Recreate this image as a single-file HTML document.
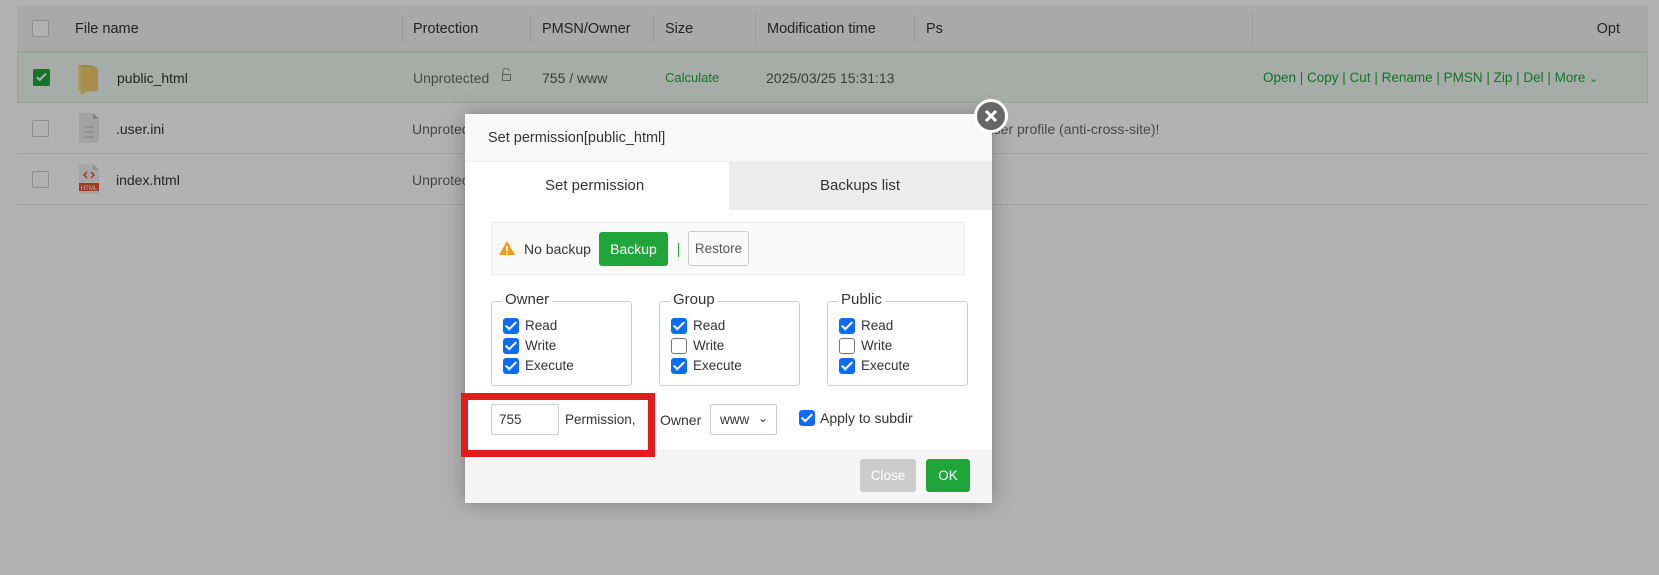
<!DOCTYPE html>
<html><head><meta charset="utf-8"><style>
*{box-sizing:border-box;margin:0;padding:0}
body{width:1659px;height:575px;overflow:hidden;background:#fff;font-family:"Liberation Sans",sans-serif;font-size:14px;color:#333;position:relative}
.abs{position:absolute}
.tbl{left:17px;top:6px;width:1631px}
.hdr{position:absolute;left:0;top:0;width:1631px;height:46px;background:#f2f2f2;border-bottom:1px solid #e6e6e6}
.row{position:absolute;left:0;width:1631px;height:51px;border-bottom:1px solid #e6e6e6}
.t{position:absolute;white-space:nowrap;line-height:20px}
.div{position:absolute;top:9px;height:28px;width:1px;background:#ddd}
.cb{position:absolute;width:17px;height:17px;border:1px solid #ccc;background:#fff;border-radius:2px}
.g{color:#20a53a}
.ov{position:absolute;left:0;top:0;width:1659px;height:575px;background:rgba(0,0,0,.3)}
.dlg{position:absolute;left:465px;top:114px;width:527px;height:389px;background:#fff;box-shadow:0 0 20px rgba(0,0,0,.3)}
.fs{position:absolute;top:187px;width:141px;height:85px;border:1px solid #ccc;border-radius:3px}
.lg{position:absolute;top:-11px;left:10px;background:#fff;padding:0 3px;font-size:15px;color:#333}
.ck{position:absolute;width:16px;height:16px;border-radius:3px;background:#0b6cf5}
.ck:after{content:"";position:absolute;left:5px;top:1px;width:4px;height:9px;border:solid #fff;border-width:0 2px 2px 0;transform:rotate(45deg)}
.uk{position:absolute;width:16px;height:16px;border-radius:3px;border:1.5px solid #777;background:#fff}
.lb{position:absolute;font-size:13.5px;line-height:16px}
</style></head><body>
<div class="abs tbl" style="height:200px">
 <div class="hdr">
  <div class="cb" style="left:15px;top:14px"></div>
  <div class="t" style="left:58px;top:13px;font-size:14.5px">File name</div>
  <div class="div" style="left:385px"></div><div class="t" style="left:396px;top:13px;font-size:14.5px">Protection</div>
  <div class="div" style="left:513px"></div><div class="t" style="left:525px;top:13px;font-size:14.5px">PMSN/Owner</div>
  <div class="div" style="left:636px"></div><div class="t" style="left:648px;top:13px;font-size:14.5px">Size</div>
  <div class="div" style="left:738px"></div><div class="t" style="left:750px;top:13px;font-size:14.5px">Modification time</div>
  <div class="div" style="left:897px"></div><div class="t" style="left:909px;top:13px;font-size:14.5px">Ps</div>
  <div class="div" style="left:1235px"></div><div class="t" style="right:28px;top:13px;font-size:14.5px">Opt</div>
 </div>
 <div class="row" style="top:46px;background:#eef8f1;border:1px solid #d8eadc">
  <div class="cb" style="left:15px;top:16px;background:#20a53a;border-color:#20a53a"><div style="position:absolute;left:5px;top:1px;width:5px;height:10px;border:solid #fff;border-width:0 2px 2px 0;transform:rotate(45deg)"></div></div>
  <svg class="abs" style="left:60px;top:10px" width="22" height="32"><path d="M0 2h13l7 3v23H3z" fill="#e4c56a"/><path d="M0 2l3 1v26l-3-2z" fill="#f3d98a"/><path d="M3 5l10-1 7 1v23l-12 1-5 3z" fill="#f1cf6e"/></svg>
  <div class="t" style="left:99px;top:15px">public_html</div>
  <div class="t" style="left:395px;top:15px;color:#666">Unprotected</div>
  <svg class="abs" style="left:482px;top:15px" width="12" height="14"><path d="M3 6V3a3 3 0 0 1 6 0" fill="none" stroke="#888"/><rect x="2.5" y="6.5" width="8" height="6" fill="none" stroke="#888"/></svg>
  <div class="t" style="left:524px;top:15px;color:#555">755 / www</div>
  <div class="t g" style="left:647px;top:15px;font-size:13px">Calculate</div>
  <div class="t" style="left:748px;top:15px;color:#555">2025/03/25 15:31:13</div>
  <div class="t g" style="left:1245px;top:15px;font-size:13.5px">Open | Copy | Cut | Rename | PMSN | Zip | Del | More <span style="font-size:11px">&#8964;</span></div>
 </div>
 <div class="row" style="top:97px">
  <div class="cb" style="left:15px;top:17px"></div>
  <svg class="abs" style="left:62px;top:10px" width="22" height="30"><path d="M0 0h14l6 6v24H0z" fill="#e8e8e8"/><path d="M14 0l6 6h-6z" fill="#bbb"/><path d="M5 14h10M5 19h10M5 24h10" stroke="#bbb"/></svg>
  <div class="t" style="left:99px;top:16px">.user.ini</div>
  <div class="t" style="left:395px;top:16px;color:#666">Unprotected</div>
  <div class="t" style="left:814px;top:16px;color:#666">Please do not delete the user profile (anti-cross-site)!</div>
 </div>
 <div class="row" style="top:148px">
  <div class="cb" style="left:15px;top:17px"></div>
  <svg class="abs" style="left:62px;top:10px" width="22" height="30"><path d="M0 0h14l6 6v24H0z" fill="#eee"/><path d="M14 0l6 6h-6z" fill="#ccc"/><path d="M8 8l-3 3 3 3M12 8l3 3-3 3" fill="none" stroke="#e4572e" stroke-width="1.5"/><rect x="0" y="19" width="20" height="8" fill="#e4572e"/><text x="10" y="26" font-size="6" fill="#fff" text-anchor="middle" font-family="Liberation Sans">HTML</text></svg>
  <div class="t" style="left:99px;top:16px">index.html</div>
  <div class="t" style="left:395px;top:16px;color:#666">Unprotected</div>
 </div>
</div>
<div class="ov"></div>
<div class="dlg">
 <div class="abs" style="left:0;top:0;width:527px;height:48px;background:#f8f8f8;border-bottom:1px solid #eee"></div>
 <div class="t" style="left:23px;top:14px;font-size:14.5px">Set permission[public_html]</div>
 <div class="abs" style="left:264px;top:48px;width:263px;height:48px;background:#ececec"></div>
 <div class="t" style="left:80px;top:62px;font-size:15px">Set permission</div>
 <div class="t" style="left:355px;top:62px;font-size:15px">Backups list</div>
 <div class="abs" style="left:26px;top:108px;width:474px;height:53px;background:#fafafa;border:1px solid #eee"></div>
 <svg class="abs" style="left:33px;top:126px" width="18" height="16"><path d="M9 1L17 15H1z" fill="#f39c12"/><path d="M9 6v5" stroke="#fff" stroke-width="1.8"/><circle cx="9" cy="13" r="1" fill="#fff"/></svg>
 <div class="t" style="left:59px;top:125px;font-size:14px">No backup</div>
 <div class="abs" style="left:134px;top:118px;width:69px;height:34px;background:#20a53a;border-radius:3px;color:#fff;text-align:center;line-height:34px;font-size:14px">Backup</div>
 <div class="abs" style="left:213px;top:129px;width:1px;height:14px;background:#20a53a"></div>
 <div class="abs" style="left:223px;top:117px;width:61px;height:35px;border:1px solid #ccc;border-radius:3px;color:#555;text-align:center;line-height:33px;font-size:13.5px">Restore</div>

 <div class="fs" style="left:26px"><div class="lg">Owner</div>
  <div class="ck" style="left:11px;top:16px"></div><div class="lb" style="left:33px;top:16px">Read</div>
  <div class="ck" style="left:11px;top:36px"></div><div class="lb" style="left:33px;top:36px">Write</div>
  <div class="ck" style="left:11px;top:56px"></div><div class="lb" style="left:33px;top:56px">Execute</div></div>
 <div class="fs" style="left:194px"><div class="lg">Group</div>
  <div class="ck" style="left:11px;top:16px"></div><div class="lb" style="left:33px;top:16px">Read</div>
  <div class="uk" style="left:11px;top:36px"></div><div class="lb" style="left:33px;top:36px">Write</div>
  <div class="ck" style="left:11px;top:56px"></div><div class="lb" style="left:33px;top:56px">Execute</div></div>
 <div class="fs" style="left:362px"><div class="lg">Public</div>
  <div class="ck" style="left:11px;top:16px"></div><div class="lb" style="left:33px;top:16px">Read</div>
  <div class="uk" style="left:11px;top:36px"></div><div class="lb" style="left:33px;top:36px">Write</div>
  <div class="ck" style="left:11px;top:56px"></div><div class="lb" style="left:33px;top:56px">Execute</div></div>

 <div class="abs" style="left:0;top:335px;width:527px;height:54px;background:#f5f5f5"></div>
 <div class="abs" style="left:26px;top:290px;width:68px;height:31px;border:1px solid #ccc;border-radius:2px;padding-left:7px;line-height:29px;font-size:13.5px">755</div>
 <div class="t" style="left:100px;top:296px;font-size:13.5px">Permission,</div>
 <div class="t" style="left:195px;top:296px;font-size:14px">Owner</div>
 <div class="abs" style="left:245px;top:290px;width:67px;height:31px;border:1px solid #ccc;border-radius:2px;padding-left:9px;line-height:29px;font-size:13.5px">www<span style="position:absolute;right:8px;top:-1px;font-size:12px">&#8964;</span></div>
 <div class="ck" style="left:334px;top:296px"></div>
 <div class="t" style="left:355px;top:294px;font-size:14px">Apply to subdir</div>
 <div class="abs" style="left:395px;top:345px;width:56px;height:33px;background:#ccc;border-radius:3px;color:#fff;text-align:center;line-height:33px;font-size:13.5px">Close</div>
 <div class="abs" style="left:461px;top:345px;width:44px;height:33px;background:#20a53a;border-radius:3px;color:#fff;text-align:center;line-height:33px;font-size:13.5px">OK</div>
</div>
<div class="abs" style="left:461px;top:393px;width:194px;height:64px;border:7px solid #e31b1b"></div>
<div class="abs" style="left:974px;top:99px;width:34px;height:34px;border-radius:50%;background:#666;border:3px solid #fff"><svg width="28" height="28" style="position:absolute;left:0;top:0"><path d="M9 9l10 10M19 9L9 19" stroke="#fff" stroke-width="3"/></svg></div>
</body></html>
